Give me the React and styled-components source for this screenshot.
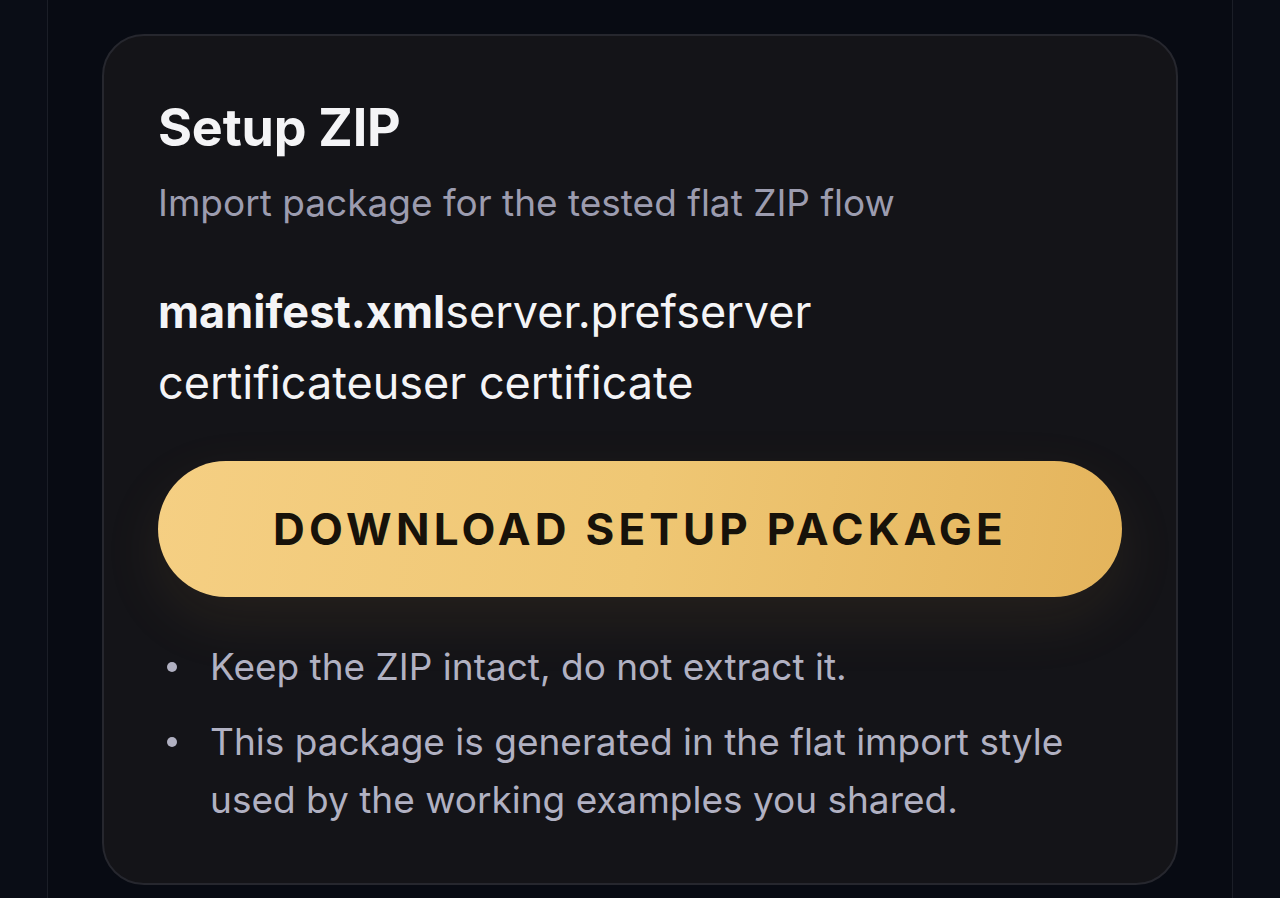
import React from "react";
import styled, { createGlobalStyle } from "styled-components";

const GlobalStyle = createGlobalStyle`
  html, body {
    margin: 0;
    padding: 0;
    background: #0a0d16;
    font-family: "Inter", "Noto Sans", sans-serif;
    -webkit-font-smoothing: antialiased;
  }
`;

const files = [
  { name: "manifest.xml", bold: true },
  { name: "server.pref" },
  { name: "server certificate" },
  { name: "user certificate" },
];

const notes = [
  "Keep the ZIP intact, do not extract it.",
  "This package is generated in the flat import style used by the working examples you shared.",
];

function App() {
  return (
    <>
      <GlobalStyle />
      <Page>
        <Panel>
          <Card>
            <Title>Setup ZIP</Title>
            <Subtitle>Import package for the tested flat ZIP flow</Subtitle>
            <FileList>
              {files.map((f) => (
                <FileName key={f.name} $bold={f.bold}>
                  {f.name}
                </FileName>
              ))}
            </FileList>
            <DownloadButton type="button">Download setup package</DownloadButton>
            <Notes>
              {notes.map((n) => (
                <Note key={n}>{n}</Note>
              ))}
            </Notes>
          </Card>
        </Panel>
      </Page>
    </>
  );
}

const Page = styled.div`
  min-height: 898px;
  padding: 0 47px;
  box-sizing: border-box;
  display: flex;
`;

const Panel = styled.div`
  flex: 1;
  background: #080b13;
  border-left: 1px solid #1b1e27;
  border-right: 1px solid #1b1e27;
  padding: 34px 54px 14px;
  box-sizing: border-box;
`;

const Card = styled.div`
  background: #141418;
  border: 2px solid #26272e;
  border-radius: 42px;
  padding: 62px 54px 54px;
  box-sizing: border-box;
  display: flex;
  flex-direction: column;
`;

const Title = styled.h2`
  margin: 0;
  font-size: 52px;
  line-height: 60px;
  font-weight: 700;
  color: #f4f4f6;
  letter-spacing: -0.2px;
`;

const Subtitle = styled.p`
  margin: 22px 0 0;
  font-size: 37px;
  line-height: 46px;
  color: #9c9caf;
`;

const FileList = styled.div`
  margin-top: 50px;
  font-size: 45px;
  line-height: 71px;
  color: #f4f4f6;
  max-width: 720px;
`;

const FileName = styled.span`
  font-weight: ${(p) => (p.$bold ? 700 : 400)};
`;

const DownloadButton = styled.button`
  margin-top: 43px;
  height: 136px;
  border: none;
  border-radius: 68px;
  background: linear-gradient(100deg, #f5cf83 0%, #efc774 50%, #e4b45c 100%);
  box-shadow: 0 22px 60px rgba(200, 150, 70, 0.1);
  color: #17120a;
  font-family: "Inter", sans-serif;
  font-size: 44px;
  font-weight: 700;
  letter-spacing: 4.2px;
  text-transform: uppercase;
  cursor: pointer;
`;

const Notes = styled.ul`
  margin: 41px 0 0;
  padding: 0 0 0 52px;
  list-style: none;
  display: flex;
  flex-direction: column;
  gap: 17px;
  font-size: 37px;
  line-height: 58px;
  color: #b1b1c2;
`;

const Note = styled.li`
  position: relative;

  &::before {
    content: "";
    position: absolute;
    left: -43px;
    top: 24px;
    width: 10px;
    height: 10px;
    border-radius: 50%;
    background: #b1b1c2;
  }
`;

export default App;
